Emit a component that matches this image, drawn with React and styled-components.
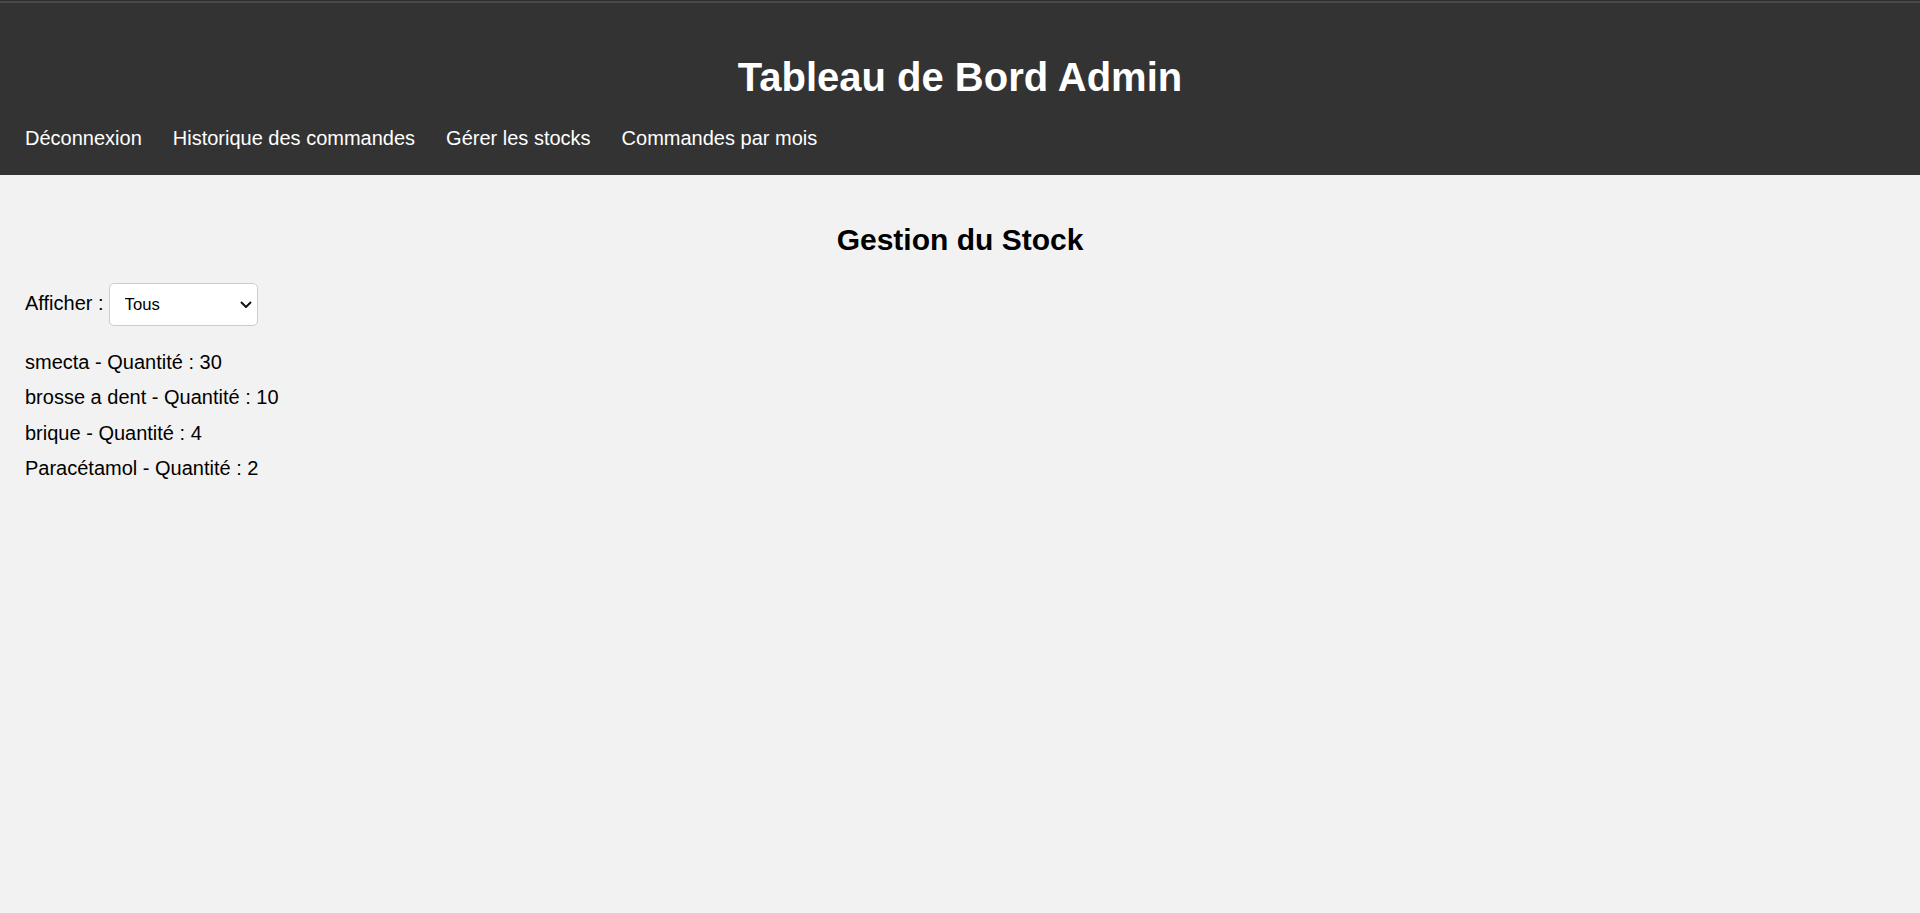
import React, { useState } from 'react'
import styled, { createGlobalStyle } from 'styled-components'

const GlobalStyle = createGlobalStyle`
    body{
        margin:0;
        background-color:#f2f2f2;
        font-family:"Liberation Sans", Arial, sans-serif;
        color:#000;
    }
`
const chevron = encodeURIComponent(
    '<svg xmlns="http://www.w3.org/2000/svg" width="12" height="7" viewBox="0 0 12 7"><path d="M1 1l5 5 5-5" fill="none" stroke="#111" stroke-width="2"/></svg>'
)

const Header = styled.header`
    background-color:#333;
    color:white;
    padding:54px 25px 25px;
    box-shadow: inset 0 1px 0 #2e2e2e, inset 0 3px 0 #4a4a4a;
`
const Title = styled.h1`
    margin:0 0 27px;
    font-size:40px;
    line-height:46px;
    font-weight:700;
    text-align:center;
`
const Nav = styled.nav`
    display:flex;
    gap:31px;
`
const NavLink = styled.a`
    color:white;
    text-decoration:none;
    font-size:20px;
    line-height:23px;
    cursor:pointer;
`
const Main = styled.main`
    padding:23px 25px 0;
`
const SubTitle = styled.h2`
    margin:25px 0;
    font-size:30px;
    line-height:34.5px;
    font-weight:700;
    text-align:center;
`
const FilterRow = styled.div`
    display:flex;
    align-items:baseline;
    gap:5px;
`
const Label = styled.label`
    font-size:20px;
    line-height:23px;
`
const Select = styled.select`
    appearance:none;
    width:149px;
    height:43px;
    padding:0 20px 0 15px;
    font-family:"Liberation Sans", Arial, sans-serif;
    font-size:16.67px;
    color:#000;
    background:white url("data:image/svg+xml,${chevron}") no-repeat right 5px center / 12px 7px;
    border:1px solid #ccc;
    border-radius:5px;
`
const List = styled.ul`
    list-style:none;
    margin:25px 0 0;
    padding:0;
`
const Item = styled.li`
    font-size:20px;
    line-height:23px;
    margin-bottom:12.5px;
`

const products = [
    { name: 'smecta', quantity: 30 },
    { name: 'brosse a dent', quantity: 10 },
    { name: 'brique', quantity: 4 },
    { name: 'Paracétamol', quantity: 2 },
]

const App = () => {
    const [filter, setFilter] = useState('tous')
    const shown = products.filter((p) => {
        if (filter === 'faible') return p.quantity < 5
        if (filter === 'dispo') return p.quantity >= 5
        return true
    })
  return (
    <>
        <GlobalStyle />
        <Header>
            <Title>Tableau de Bord Admin</Title>
            <Nav>
                <NavLink>Déconnexion</NavLink>
                <NavLink>Historique des commandes</NavLink>
                <NavLink>Gérer les stocks</NavLink>
                <NavLink>Commandes par mois</NavLink>
            </Nav>
        </Header>
        <Main>
            <SubTitle>Gestion du Stock</SubTitle>
            <FilterRow>
                <Label htmlFor="filtre">Afficher :</Label>
                <Select id="filtre" value={filter} onChange={(e) => setFilter(e.target.value)}>
                    <option value="tous">Tous</option>
                    <option value="faible">Stock faible</option>
                    <option value="dispo">Disponibles</option>
                </Select>
            </FilterRow>
            <List>
                {shown.map((p) => (
                    <Item key={p.name}>{p.name} - Quantité : {p.quantity}</Item>
                ))}
            </List>
        </Main>
    </>
  )
}

export default App
